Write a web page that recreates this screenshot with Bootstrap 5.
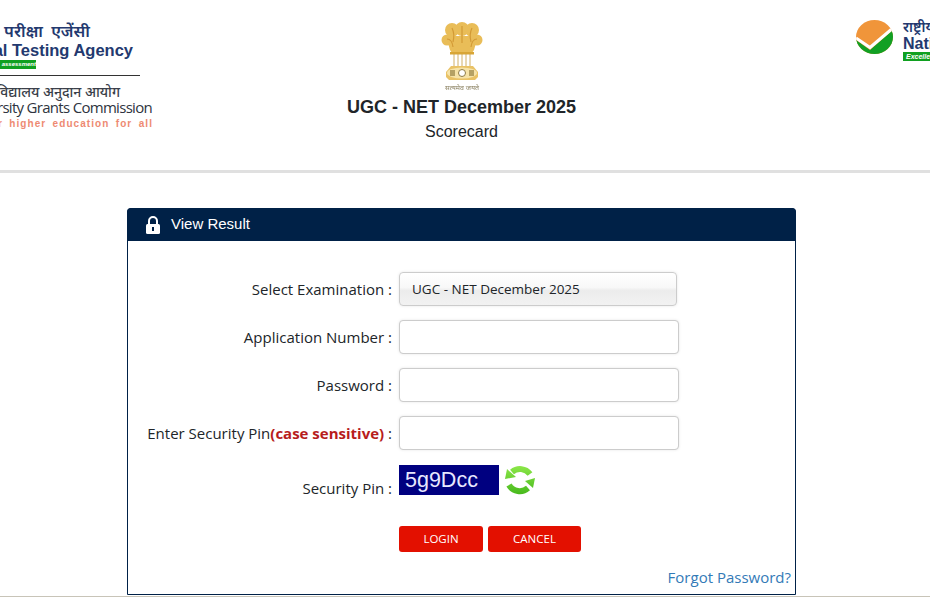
<!DOCTYPE html>
<html lang="en">
<head>
    <meta charset="UTF-8">
    <meta name="viewport" content="width=device-width, initial-scale=1.0">
    <title>UGC - NET December 2025 Scorecard</title>
    <link href="https://cdn.jsdelivr.net/npm/bootstrap@5.3.3/dist/css/bootstrap.min.css" rel="stylesheet">
    <script src="https://cdn.jsdelivr.net/npm/bootstrap@5.3.3/dist/js/bootstrap.bundle.min.js"></script>
    <style>
        html, body { height: 597px; overflow: hidden; background: #fff; }
        body { font-family: "Open Sans", "Noto Sans", sans-serif; color: #212529; }

        /* top header */
        .site-head { height: 173px; border-bottom: 3px solid #e0e0e0; overflow: hidden; }
        .logo-left { width: 154px; height: 170px; overflow: hidden; flex: none; }
        .logo-clip { white-space: nowrap; line-height: 1; }
        .nta-hi { font-size: 16.5px; color: #23396f; margin-top: 23px; padding-right: 64px; font-weight: 600; word-spacing: 4px; height: 18px; }
        .nta-en { font-family: "Liberation Sans", sans-serif; font-size: 16.5px; font-weight: 700; color: #23396f; padding-right: 21px; height: 18px; margin-top: 1px; }
        .nta-tag { font-family: "Liberation Sans", sans-serif; font-size: 6px; font-style: italic; font-weight: 700; color: #fff; background: #10a020; width: 36px; height: 9px; line-height: 9px; margin-right: 118px; }
        .logo-rule { height: 1px; background: #333; width: 140px; margin: 6px 14px 0 0; }
        .ugc-hi { font-size: 14px; color: #3a3f4a; margin-top: 9px; padding-right: 34px; font-weight: 500; height: 15px; }
        .ugc-en { font-size: 15px; color: #2e3440; padding-right: 2px; height: 20px; letter-spacing: -.7px; }
        .ugc-tag { font-family: "Liberation Sans", sans-serif; font-size: 10px; font-weight: 700; color: #ee8a72; letter-spacing: 1.07px; word-spacing: 2.5px; padding-right: 1px; margin-top: -1px; }
        .head-mid { width: 615px; flex: none; padding-top: 20px; }
        .emblem-art { display: block; margin: 0 auto; filter: blur(.5px); }
        .head-title { font-family: "Liberation Sans", sans-serif; font-size: 18px; font-weight: 700; line-height: 20px; margin-top: 5px; }
        .head-sub { font-family: "Liberation Sans", sans-serif; font-size: 16px; line-height: 18px; margin-top: 6px; }
        .logo-right { margin-left: 87px; padding-top: 20px; flex: none; width: 74px; overflow: hidden; gap: 10px; }
        .nta-mark { flex: none; }
        .nat-hi { font-size: 14px; color: #23396f; font-weight: 600; line-height: 14px; height: 15px; }
        .nat-en { font-family: "Liberation Sans", sans-serif; font-size: 16px; font-weight: 700; color: #23396f; line-height: 17px; white-space: nowrap; }
        .nat-tag { font-family: "Liberation Sans", sans-serif; font-size: 7px; font-style: italic; font-weight: 700; color: #fff; background: #10a020; line-height: 9px; height: 9px; padding-left: 3px; white-space: nowrap; }

        /* result panel */
        .result-panel { width: 669px; height: 387px; margin: 35px 0 0 127px; border: 1px solid #002147; border-radius: 4px 4px 0 0; }
        .result-panel .card-header { height: 33px; margin: -1px -1px 0; padding: 0 0 0 19px; gap: 11px; background: #002147; color: #fff; font-family: "Liberation Sans", sans-serif; font-size: 15px; border: 0; border-radius: 4px 4px 0 0; }
        .result-form { padding-top: 31px; }
        .form-line { height: 34px; margin-bottom: 14px; }
        .line-label { width: 271px; text-align: right; font-size: 15px; padding-right: 7px; flex: none; margin: 0; }
        .line-label b { color: #b71c1c; }
        .pin-label { padding-top: 12px; }
        .exam-box { width: 278px; height: 34px; border: 1px solid #ccc; border-radius: 4px; padding: 0 0 0 12px; font-size: 13.5px; background: linear-gradient(#fff 0, #f8f8f8 45%, #ececec 55%, #f2f2f2 100%); box-shadow: 0 0 3px rgba(0,0,0,.1); }
        .form-control.pin-input { width: 280px; height: 34px; border: 1px solid #ccc; border-radius: 4px; box-shadow: 0 0 3px rgba(0,0,0,.1); }
        .pin-line { height: 30px; margin-top: 15px; }
        .captcha-box { width: 100px; height: 30px; background: #000080; color: #e8e8ff; font-family: "Liberation Sans", sans-serif; font-size: 21.5px; line-height: 30px; padding-left: 6px; }
        .refresh-art { margin-left: 5px; }
        .buttons-row { margin-top: 31px; }
        .red-btn { background: #e31000; color: #fff; border: 0; border-radius: 3px; height: 26px; font-size: 11.5px; padding: 0; }
        .red-btn:hover { background: #c90e00; color: #fff; }
        .login-btn { width: 84px; }
        .cancel-btn { width: 93px; margin-left: 5px; }
        .forgot-row { padding: 0 4px 5px 0; }
        .forgot-link { font-size: 15px; color: #337ab7; text-decoration: none; }
        .foot-line { border-top: 1px solid #c8c4b8; margin-top: 1px; }
    </style>
</head>
<body>

<header class="site-head d-flex">
    <div class="logo-left">
        <div class="logo-clip d-flex flex-column align-items-end">
            <div class="nta-hi">परीक्षा एजेंसी</div>
            <div class="nta-en">National Testing Agency</div>
            <div class="nta-tag overflow-hidden text-end">assessment</div>
            <div class="logo-rule"></div>
            <div class="ugc-hi">विद्यालय अनुदान आयोग</div>
            <div class="ugc-en">University Grants Commission</div>
            <div class="ugc-tag">for higher education for all</div>
        </div>
    </div>
    <div class="head-mid text-center">
        <svg class="emblem-art" width="42" height="72" viewBox="0 0 42 72">
            <g fill="#e9bd58">
                <circle cx="21" cy="9" r="7"/><circle cx="11" cy="10" r="7"/><circle cx="31" cy="10" r="7"/>
                <circle cx="6" cy="20" r="5.500"/><circle cx="36" cy="20" r="5.500"/>
                <path d="M5 16h32l-4 14 -2 3H11l-2-3z"/>
            </g>
            <g fill="none" stroke="#d39a35" stroke-width="1.200">
                <path d="M11 8q3 6 1 14M21 6v17M31 8q-3 6-1 14M6 19q5 0 6 8M36 19q-5 0-6 8"/>
            </g>
            <rect x="9" y="32" width="24" height="2.500" fill="#d8a536"/>
            <g stroke="#c9a24e" stroke-width="1.300" opacity=".65">
                <path d="M13 34v13M17 34v13M21 34v13M25 34v13M29 34v13"/>
            </g>
            <path d="M10 46h22l5 6v5l-3 3H8l-3-3v-5z" fill="#e9c266"/>
            <ellipse cx="21" cy="53" rx="15" ry="5.500" fill="#f6e3a8"/>
            <circle cx="21" cy="53" r="3.500" fill="#fff" stroke="#8f7c45"/>
            <path d="M9 50h5v6H9zM28 50h5v6h-5z" fill="#9a8547" opacity=".7"/>
            <text x="21" y="70" text-anchor="middle" font-size="7" fill="#8a8060" font-family="Noto Sans, sans-serif">सत्यमेव जयते</text>
        </svg>
        <div class="head-title">UGC - NET December 2025</div>
        <div class="head-sub">Scorecard</div>
    </div>
    <div class="logo-right d-flex">
        <svg class="nta-mark" width="37" height="34" viewBox="0 0 37 34">
            <defs><clipPath id="markClip"><ellipse cx="18.500" cy="17" rx="18.500" ry="17"/></clipPath></defs>
            <g clip-path="url(#markClip)">
                <rect width="37" height="34" fill="#f0953a"/>
                <path d="M0 20l14 10 23-20v24H0z" fill="#12a024"/>
                <path d="M0 18l14 9.500L37 8" fill="none" stroke="#fff" stroke-width="3"/>
            </g>
        </svg>
        <div class="nat-text">
            <div class="nat-hi">राष्ट्रीय</div>
            <div class="nat-en">National</div>
            <div class="nat-tag">Excellence</div>
        </div>
    </div>
</header>

<div class="card result-panel">
    <div class="card-header d-flex align-items-center">
        <svg width="14" height="18" viewBox="0 0 14 18">
            <path d="M3 9V5a4 4 0 0 1 8 0v4" fill="none" stroke="#fff" stroke-width="2"/>
            <rect x="0" y="8" width="14" height="10" rx="1.500" fill="#fff"/>
            <rect x="6" y="11" width="2" height="4" fill="#002147"/>
        </svg>
        <span>View Result</span>
    </div>
    <div class="card-body p-0 d-flex flex-column">
        <form class="result-form">
            <div class="form-line d-flex align-items-center">
                <div class="line-label">Select Examination :</div>
                <div class="exam-box d-flex align-items-center">UGC - NET December 2025</div>
            </div>
            <div class="form-line d-flex align-items-center">
                <label class="line-label" for="appNo">Application Number :</label>
                <input class="form-control pin-input" type="text" id="appNo">
            </div>
            <div class="form-line d-flex align-items-center">
                <label class="line-label" for="pwd">Password :</label>
                <input class="form-control pin-input" type="password" id="pwd">
            </div>
            <div class="form-line d-flex align-items-center">
                <label class="line-label" for="pin">Enter Security Pin<b>(case sensitive)</b> :</label>
                <input class="form-control pin-input" type="text" id="pin">
            </div>
            <div class="pin-line d-flex align-items-start">
                <div class="line-label pin-label">Security Pin :</div>
                <div class="captcha-box">5g9Dcc</div>
                <svg class="refresh-art" width="32" height="30" viewBox="0 0 32 30">
                    <defs>
                        <linearGradient id="limeGrad" gradientUnits="userSpaceOnUse" x1="0" y1="0" x2="0" y2="30">
                            <stop offset="0" stop-color="#8ee84a"/>
                            <stop offset="1" stop-color="#46b81c"/>
                        </linearGradient>
                    </defs>
                    <g fill="none" stroke="url(#limeGrad)" stroke-width="6">
                        <path d="M26 9A12.500 12.500 0 0 0 8 7"/>
                        <path d="M5 20A12.500 12.500 0 0 0 24 23"/>
                    </g>
                    <g fill="url(#limeGrad)">
                        <path d="M3 4l9 8-11 2z"/>
                        <path d="M31 13l-10 3 8 7z"/>
                    </g>
                </svg>
            </div>
            <div class="buttons-row d-flex">
                <div class="line-label"></div>
                <button type="button" class="btn red-btn login-btn">LOGIN</button>
                <button type="button" class="btn red-btn cancel-btn">CANCEL</button>
            </div>
        </form>
        <div class="forgot-row text-end mt-auto">
            <a class="forgot-link" href="#">Forgot Password?</a>
        </div>
    </div>
</div>
<div class="foot-line"></div>

</body>
</html>
